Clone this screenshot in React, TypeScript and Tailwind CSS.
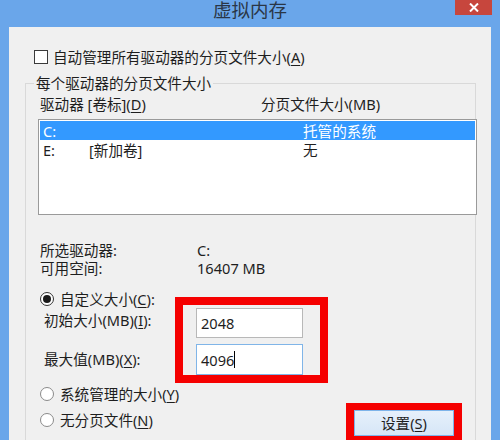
import React from "react";

const font = { fontFamily: '"Noto Sans", "Noto Sans CJK SC", sans-serif' };

function U({ c }: { c: string }) {
  return <span className="underline underline-offset-2 decoration-1">{c}</span>;
}

function Radio({ checked }: { checked?: boolean }) {
  return (
    <span
      className={`w-[14px] h-[14px] rounded-full border bg-white flex items-center justify-center shrink-0 ${
        checked ? "border-[#333]" : "border-[#8a8a8a]"
      }`}
    >
      {checked && <span className="w-[8px] h-[8px] rounded-full bg-[#1a1a1a]" />}
    </span>
  );
}

export default function App() {
  return (
    <div
      className="w-[500px] h-[440px] bg-[#6aa6ea] flex flex-col overflow-hidden text-[14.6px] leading-[18px] text-[#1e1e1e]"
      style={font}
    >
      {/* title bar */}
      <div className="h-[27px] relative shrink-0 flex justify-center items-start">
        <span className="text-[18.5px] leading-[26px] -mt-[3px] text-[#2a3646]">虚拟内存</span>
        <div className="absolute right-[8px] top-0 w-[37px] h-[15px] bg-[#c7463d] flex items-center justify-center">
          <svg width="10" height="9" viewBox="0 0 10 9">
            <path d="M1 0.5 L9 8.5 M9 0.5 L1 8.5" stroke="#fff" strokeWidth="2" />
          </svg>
        </div>
      </div>

      {/* content */}
      <div className="mx-[9px] flex-1 bg-[#f0f0f0] flex flex-col">
        <div className="flex items-center pl-[25px] pt-[21px] gap-[5px]">
          <span className="w-[14px] h-[14px] border border-[#3a3a3a] bg-white shrink-0" />
          <span>
            自动管理所有驱动器的分页文件大小(<U c="A" />)
          </span>
        </div>

        <fieldset className="ml-[16px] mr-[15px] mt-[8px] border border-[#d9d9d9] pb-[40px]">
          <legend className="ml-[8px] px-[2px]">每个驱动器的分页文件大小</legend>

          <div className="flex pl-[14px] pt-[3px]">
            <span className="w-[221px]">
              驱动器 [卷标](<U c="D" />)
            </span>
            <span>分页文件大小(MB)</span>
          </div>

          <div className="ml-[12px] -mr-[2px] mt-[6px] h-[96px] border border-[#9a9a9a] bg-white p-[1px]">
            <div className="h-[19px] bg-[#3399ff] text-white flex items-center pl-[3px]">
              <span className="w-[46px]">C:</span>
              <span className="w-[214px]"></span>
              <span>托管的系统</span>
            </div>
            <div className="h-[19px] flex items-center pl-[3px]">
              <span className="w-[46px]">E:</span>
              <span className="w-[214px]">[新加卷]</span>
              <span>无</span>
            </div>
          </div>

          <div className="pl-[14px] mt-[26px] flex flex-col">
            <div className="flex h-[18px] items-center">
              <span className="w-[157px]">所选驱动器:</span>
              <span>C:</span>
            </div>
            <div className="flex h-[18px] items-center">
              <span className="w-[157px]">可用空间:</span>
              <span>16407 MB</span>
            </div>
          </div>

          {/* Row A */}
          <div className="flex items-start pl-[14px] mt-[13px]">
            <div className="w-[135px] flex flex-col">
              <div className="flex items-center gap-[6px] h-[18px]">
                <Radio checked />
                <span>
                  自定义大小(<U c="C" />):
                </span>
              </div>
              <span className="pl-[4px] mt-[3px]">
                初始大小(MB)(<U c="I" />):
              </span>
              <span className="pl-[4px] mt-[21px]">
                最大值(MB)(<U c="X" />):
              </span>
            </div>
            <div className="mt-[7px] w-[153px] border-[8px] border-[#f50000] pt-[3px] pl-[13px] flex flex-col gap-[6px]">
              <div className="w-[107px] h-[30px] bg-white border border-[#b8b8b8] flex items-center pl-[4px]">
                2048
              </div>
              <div className="w-[107px] h-[31px] bg-white border border-[#80b5e8] flex items-center pl-[4px]">
                4096<span className="w-[1px] h-[17px] bg-black" />
              </div>
            </div>
          </div>

          {/* Row B */}
          <div className="flex items-start pl-[14px]">
            <div className="w-[306px] flex flex-col">
              <div className="flex items-center gap-[6px] h-[18px] mt-[2px]">
                <Radio />
                <span>
                  系统管理的大小(<U c="Y" />)
                </span>
              </div>
              <div className="flex items-center gap-[6px] h-[18px] mt-[8px]">
                <Radio />
                <span>
                  无分页文件(<U c="N" />)
                </span>
              </div>
            </div>
            <div className="mt-[20px] w-[116px] border-[8px] border-t-[7px] border-[#f50000]">
              <div className="h-[26px] bg-gradient-to-b from-[#e6f0fb] to-[#d6e6f7] border border-[#7eb4ea] flex items-center justify-center">
                设置(<U c="S" />)
              </div>
            </div>
          </div>
        </fieldset>
      </div>
    </div>
  );
}
